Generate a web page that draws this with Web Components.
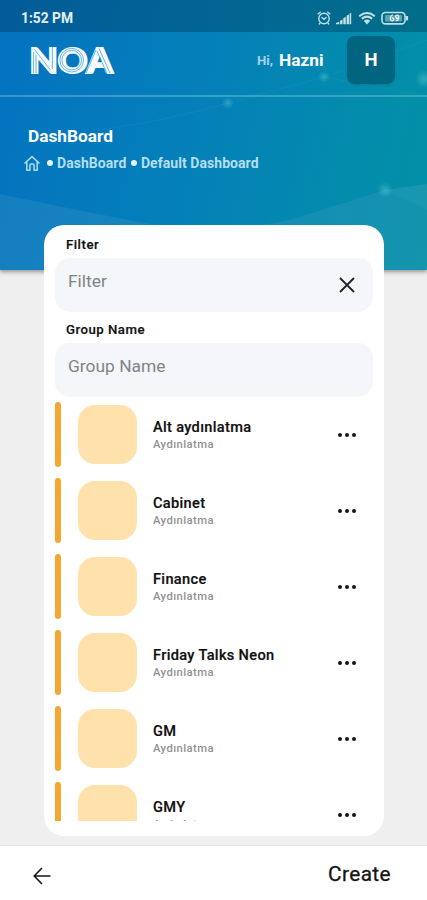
<!DOCTYPE html>
<html lang="en">
<head>
<meta charset="utf-8">
<title>NOA DashBoard</title>
<style>
html,body{margin:0;height:100%}
body{font-family:Roboto,"Noto Sans",sans-serif;background:#efefef;overflow:hidden}
</style>
</head>
<body>
<noa-app></noa-app>
<script>
function define(name, html) {
  const t = document.createElement('template');
  t.innerHTML = html;
  customElements.define(name, class extends HTMLElement {
    constructor() {
      super();
      this.attachShadow({mode: 'open'}).appendChild(t.content.cloneNode(true));
    }
  });
}

define('status-bar', `
<style>
:host{display:flex;height:32px;box-sizing:border-box;padding:4px 18px 0 21px;align-items:center;justify-content:space-between;background:rgba(0,52,82,.36);color:#e3f0f6;font-size:13.8px;font-weight:700;line-height:18px}
svg{display:block}
</style>
<span>1:52 PM</span>
<svg width="93" height="16" viewBox="0 0 93 16" fill="none" stroke="#c3dfe6" stroke-width="1.4">
  <circle cx="8" cy="8.5" r="5.2"/><path d="M1.6 4.2 4.8 1.8M14.4 4.2 11.2 1.8M5.5 7.2 8 9.3l2.6-2M4 13l-1 1.5M12 13l1 1.5"/>
  <g stroke="none" fill="#c3dfe6"><path d="M20 14.3h3.2v-2.6L20 13zM24 14.3h2.5V9.5L24 10.8zM27.3 14.3h2.5V6.8l-2.5 1.5zM30.6 14.3H33V4.2l-2.4 1.5zM33.6 14.3h1.6V2.8l-1.6.8z"/></g>
  <path d="M43.2 6.2q7.8-6.4 15.6 0M45.8 8.7q5.2-4.2 10.4 0" stroke-width="2"/><path d="M47.7 10.8q3.3-2.6 6.6 0L51 14.5z" fill="#c3dfe6" stroke="none"/>
  <rect x="66" y="2.5" width="23" height="11.4" rx="3.4" stroke-width="1.6"/><path d="M91 6v4.4" stroke-width="2.2"/>
  <rect x="69" y="5" width="17" height="6.5" rx="1" fill="#8fc3cb" stroke="none" opacity=".65"/>
  <path d="M76.8 4.8c-3 1-3.2 6-.7 6 2.3 0 2.2-3.2-.3-2.8M82.3 5.4c-3-1-3.5 2.6-1.3 3 2.5.2 2-3 .4-3M82.6 6c.5 3-1 5-2.7 4.5" stroke="#e9f7f7" stroke-width="1.2"/>
</svg>`);

define('noa-logo', `
<style>:host{display:block}svg{display:block;overflow:visible}text{font-family:Lato,"Noto Sans",sans-serif;font-weight:900;font-size:35px}</style>
<svg width="96" height="36" viewBox="0 0 96 36">
  <text x="4.5" y="30.5" textLength="83" lengthAdjust="spacingAndGlyphs" fill="#f3fbff" stroke="#f3fbff" stroke-width="2.2">NOA</text>
  <g fill="none" stroke="#3d97cf" stroke-width=".7">
    <path d="M8.6 31V10M11 31V13M9.5 7.5 25.5 28M27.4 5v22"/>
    <circle cx="46.7" cy="18.2" r="11.8"/><circle cx="46.7" cy="18.2" r="9.8"/><path d="M71 8 61 31M74 6.5 85 31M72 9l9.8 22"/>
  </g>
</svg>`);

define('top-bar', `
<style>
:host{display:flex;height:65px;box-sizing:border-box;align-items:flex-start;justify-content:space-between;border-bottom:2px solid rgba(125,202,224,.42);padding:4px 32px 0 25px}
noa-logo{margin-top:6px}
.user{display:flex;align-items:center;color:#fff;height:48px}
.hi{font-size:13.2px;font-weight:700;color:#a2d3e8;margin-right:6px}
.name{font-size:17.3px;font-weight:700;margin-right:23.5px}
.av{width:48px;height:48px;border-radius:8px;background:#02657f;display:grid;place-items:center;font-size:18.5px;font-weight:700;box-shadow:0 1px 2px #0453}
</style>
<noa-logo></noa-logo>
<div class="user"><span class="hi">Hi,</span><span class="name">Hazni</span><div class="av">H</div></div>`);

define('page-title', `
<style>
:host{display:block;padding:28px 0 0 24px;color:#fff}
h1{margin:0 0 0 4px;font-size:17.3px;line-height:22px;font-weight:700}
nav{display:flex;align-items:center;height:20px;margin-top:6px;color:#b5def0;font-size:14px;letter-spacing:.06px;font-weight:700}
svg{display:block;margin-right:7px}
i{width:6px;height:6px;border-radius:50%;background:#e6f8ff;margin-right:4px}
i+span{margin-right:4.5px}
</style>
<h1>DashBoard</h1>
<nav><svg width="16" height="17" viewBox="0 0 16 17" fill="none" stroke="#a9d9ee" stroke-width="1.6" stroke-linejoin="round" stroke-linecap="round"><path d="M1 8 8 1.7 15 8M2.8 6.8v8.4h3.1V10q0-1 1-1h2.2q1 0 1 1v5.2h3.1V6.8"/></svg>
<i></i><span>DashBoard</span><i></i><span>Default Dashboard</span></nav>`);

define('noa-header', `
<style>
:host{display:block;position:relative;height:270px;background:linear-gradient(102deg,#0473c0 4%,#0481b8 48%,#038ea9 88%,#0490a6);box-shadow:0 2px 4px rgba(70,60,60,.5)}
.art{position:absolute;inset:0}
.in{position:relative}
</style>
<svg class="art" width="427" height="270" viewBox="0 0 427 270">
  <defs><radialGradient id="g"><stop offset="0" stop-color="#7fe0e6" stop-opacity=".34"/><stop offset="1" stop-color="#7fe0e6" stop-opacity="0"/></radialGradient></defs>
  <path d="M0 194Q80 211 160 226 230 233 290 220L385 190 427 184V270H0z" fill="#5aa5cc" opacity=".2"/>
  <path d="M385 190 427 210V184z" fill="#3bb9bd" opacity=".12"/>
  <path d="M228 103 324 77 427 40M100 130Q170 120 228 103M324 77 427 96" stroke="#55c5dc" stroke-opacity=".1" fill="none"/>
  <circle cx="385" cy="190" r="8" fill="url(#g)"/><circle cx="324" cy="77" r="6" fill="url(#g)"/><circle cx="228" cy="103" r="6" fill="url(#g)"/><circle cx="424" cy="79" r="9" fill="url(#g)"/>
</svg>
<div class="in"><slot></slot></div>`);

define('text-field', `
<style>
:host{display:block}
label{display:block;height:28px;line-height:30px;padding-left:11px;font-size:13.2px;font-weight:500;color:#111;letter-spacing:.5px;-webkit-text-stroke:.2px #111}
.box{height:54px;box-sizing:border-box;border-radius:15px;background:#f4f6fa;display:flex;justify-content:space-between;padding:13px 18px 0 13px;font-size:17.4px;line-height:20px;color:#81848a}
::slotted(svg){margin-top:6px}
</style>
<label></label><div class="box"><span></span><slot></slot></div>`);

define('group-row', `
<style>
:host{display:flex;height:65px;margin-bottom:11px;flex:none}
.bar{width:6px;border-radius:3px;background:#f3a72f;margin-right:17px}
.tile{width:58.5px;height:59px;border-radius:17px;background:#ffe2ab;margin:3px 16.5px 0 0}
.t{flex:1;padding-top:16px}
b{display:block;font-size:14.6px;line-height:19px;font-weight:500;color:#111;letter-spacing:.32px;-webkit-text-stroke:.2px #111}
small{display:block;font-size:11.3px;line-height:16px;color:#929292;letter-spacing:.4px;font-weight:500}
.d{display:flex;gap:2.4px;margin:30.5px 17px 0 0}
.d i{width:4.4px;height:4.4px;border-radius:50%;background:#171717}
</style>
<div class="bar"></div><div class="tile"></div><div class="t"><b><slot></slot></b><small>Aydınlatma</small></div><div class="d"><i></i><i></i><i></i></div>`);

define('filter-card', `
<style>
:host{display:flex;flex-direction:column;position:relative;width:340px;height:611px;box-sizing:border-box;margin:-45px 0 0 44px;padding:5px 11px 15px;background:#fff;border-radius:20px}
.field2{margin-top:3px}
.list{display:flex;flex-direction:column;flex:1;min-height:0;overflow:hidden;margin-top:5px}
</style>
<text-field label="Filter"><svg width="16" height="16" viewBox="0 0 16 16" stroke="#222" stroke-width="1.8"><path d="M1 1 15 15M15 1 1 15"/></svg></text-field>
<text-field class="field2" label="Group Name"></text-field>
<div class="list"><slot></slot></div>`);

define('bottom-bar', `
<style>
:host{display:flex;height:54px;box-sizing:border-box;margin-top:10px;align-items:center;justify-content:space-between;background:#fff;padding:2px 36px 0 33px;box-shadow:0 -1px 1px #e6e6e6;font-size:20.8px;letter-spacing:.4px;color:#161616;-webkit-text-stroke:.3px #161616}
svg{display:block;margin-top:4px}
</style>
<svg width="18" height="18" viewBox="0 0 18 18" fill="none" stroke="#181818" stroke-width="1.6"><path d="M17.5 9H1.5M9 1 1.2 9 9 17"/></svg>
<span>Create</span>`);

define('noa-app', `
<style>:host{display:block;height:900px;width:427px;overflow:hidden;background:#efefef}</style>
<noa-header><status-bar></status-bar><top-bar></top-bar><page-title></page-title></noa-header>
<filter-card>
<group-row>Alt aydınlatma</group-row><group-row>Cabinet</group-row><group-row>Finance</group-row><group-row>Friday Talks Neon</group-row><group-row>GM</group-row><group-row>GMY</group-row>
</filter-card>
<bottom-bar></bottom-bar>`);

function fillLabels(root) {
  root.querySelectorAll('*').forEach(el => {
    if (el.localName === 'text-field') {
      el.shadowRoot.querySelector('label').textContent = el.getAttribute('label');
      el.shadowRoot.querySelector('.box span').textContent = el.getAttribute('label');
    }
    if (el.shadowRoot) fillLabels(el.shadowRoot);
  });
}
fillLabels(document);
</script>
</body>
</html>
